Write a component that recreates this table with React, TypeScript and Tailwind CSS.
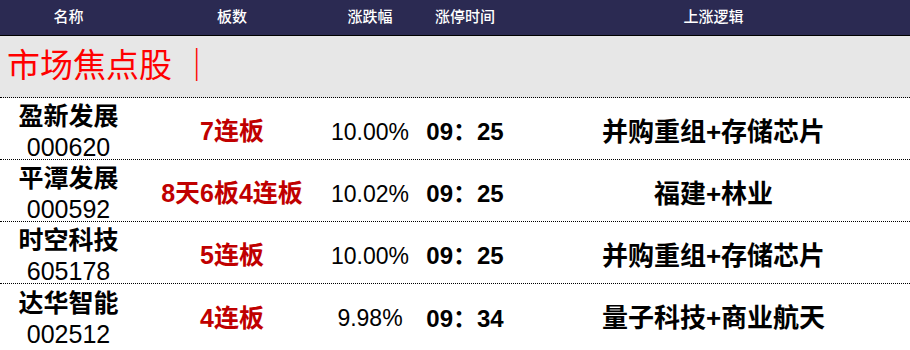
import React from "react";

const rows = [
  { name: "盈新发展", code: "000620", board: "7连板", pct: "10.00%", time: "09：25", logic: "并购重组+存储芯片" },
  { name: "平潭发展", code: "000592", board: "8天6板4连板", pct: "10.02%", time: "09：25", logic: "福建+林业" },
  { name: "时空科技", code: "605178", board: "5连板", pct: "10.00%", time: "09：25", logic: "并购重组+存储芯片" },
  { name: "达华智能", code: "002512", board: "4连板", pct: "9.98%", time: "09：34", logic: "量子科技+商业航天" },
];

const font = "font-['Liberation_Sans','Noto_Sans_CJK_SC',sans-serif]";

export default function App() {
  return (
    <div className={`w-[910px] h-[350px] overflow-hidden bg-white ${font}`}>
      <div className="h-[36px] bg-[#2b2a52] border-b border-black flex items-center text-white text-[15px] font-medium">
        <div className="w-[137px] text-center">名称</div>
        <div className="w-[190px] text-center">板数</div>
        <div className="w-[86px] text-center">涨跌幅</div>
        <div className="w-[104px] text-center">涨停时间</div>
        <div className="flex-1 text-center">上涨逻辑</div>
      </div>
      <div className="h-[62px] bg-[#e7e7e7] border-b border-dotted border-black flex items-center pl-[7px] text-[#ff0000] text-[33px] font-['Liberation_Serif','Noto_Sans_CJK_SC',serif]">
        市场焦点股 ｜
      </div>
      {rows.map((r, i) => (
        <div
          key={r.code}
          className={`h-[62px] pt-[7px] flex items-center text-black ${i < rows.length - 1 ? "border-b border-dotted border-black" : ""}`}
        >
          <div className="w-[137px] flex flex-col items-center leading-[31px]">
            <div className="text-[25px] font-semibold">{r.name}</div>
            <div className="text-[25px]">{r.code}</div>
          </div>
          <div className="w-[190px] text-center text-[25px] font-semibold text-[#c00000]">{r.board}</div>
          <div className="w-[86px] text-center text-[23px]">{r.pct}</div>
          <div className="w-[104px] text-center text-[24px] font-semibold">{r.time}</div>
          <div className="flex-1 text-center text-[26px] font-semibold">{r.logic}</div>
        </div>
      ))}
    </div>
  );
}
